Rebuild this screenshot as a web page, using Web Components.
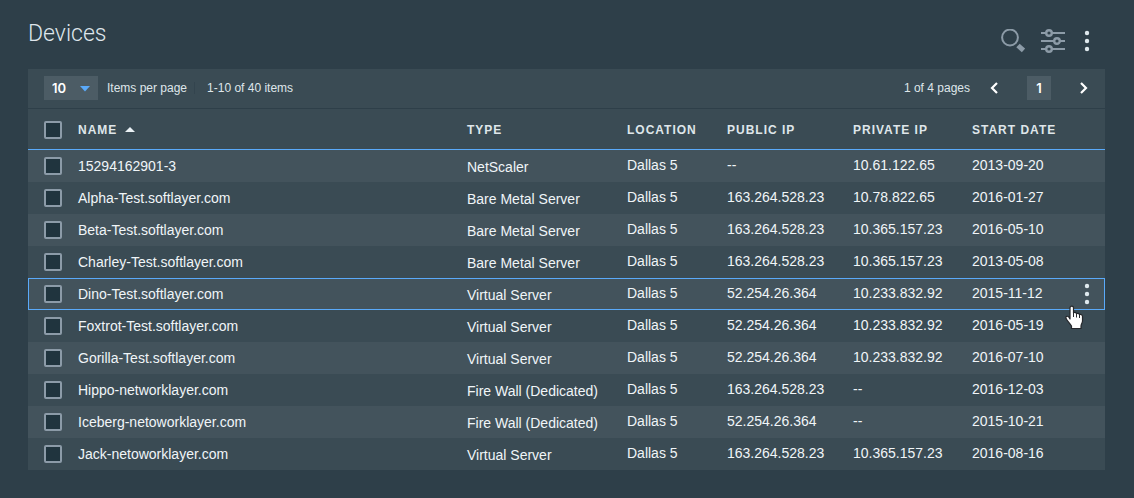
<!DOCTYPE html>
<html lang="en">
<head>
<meta charset="utf-8">
<title>Devices</title>
<style>
  body { margin: 0; min-height: 100vh; background: #2e3f49; font-family: "Liberation Sans", Arial, sans-serif; color: #f0f5f8; }
</style>
</head>
<body>
<devices-page></devices-page>

<template id="page-tpl">
  <style>
    :host { display: block; padding: 20px 29px 28px 28px; }
  </style>
  <page-header>Devices</page-header>
  <main>
    <pagination-bar></pagination-bar>
    <device-table></device-table>
  </main>
</template>

<template id="header-tpl">
  <style>
    :host { display: flex; justify-content: space-between; align-items: flex-start; height: 49px; }
    h1 { margin: 0; font: 300 23px/27px Roboto, sans-serif; color: #dfe6ec; }
    nav { display: flex; gap: 16px; padding: 9px 12px 0 0; }
    button { display: block; padding: 0; border: 0; background: none; color: #8c9ba7; height: 24px; }
    button:last-child { color: #dfe9ee; }
    svg { display: block; }
  </style>
  <h1><slot></slot></h1>
  <nav aria-label="Table tools">
    <button type="button" aria-label="Search"><svg width="24" height="24" viewBox="0 0 24 24" fill="none" stroke="currentColor"><circle cx="9" cy="8.500" r="7.900" stroke-width="2"/><path d="M17 16.500l5.500 5" stroke-width="5"/></svg></button>
    <button type="button" aria-label="Filter"><svg width="24" height="24" viewBox="0 0 24 24" fill="none" stroke="currentColor"><path d="M0 4h5M11 4h13M0 12h13M19 12h5M0 20h5M11 20h13" stroke-width="2"/><g stroke-width="2.400"><circle cx="8" cy="4" r="2.800"/><circle cx="16" cy="12" r="2.800"/><circle cx="8" cy="20" r="2.800"/></g></svg></button>
    <button type="button" aria-label="More options"><dots-icon></dots-icon></button>
  </nav>
</template>

<template id="dots-tpl">
  <style>
    :host { display: block; width: 12px; height: 24px; }
    svg { display: block; }
  </style>
  <svg width="12" height="24" viewBox="0 0 12 24" fill="currentColor"><circle cx="6" cy="4" r="2.200"/><circle cx="6" cy="12" r="2.200"/><circle cx="6" cy="20" r="2.200"/></svg>
</template>

<template id="pagination-tpl">
  <style>
    :host { display: flex; align-items: center; justify-content: space-between; height: 38px; padding: 0 14px 1px 16px; background: #3a4b54; border-bottom: 1px solid #2e3f49; font-size: 12px; line-height: 16px; color: #dfe6ea; }
    div { display: flex; align-items: center; }
    .size { position: relative; margin-right: 9px; }
    select { appearance: none; display: block; width: 54px; height: 24px; padding: 0 8px; border: 0; border-radius: 0; background: #4c5c65; color: #fff; font: 600 13px/24px Inter, sans-serif; }
    .size svg { position: absolute; right: 8px; top: 10px; pointer-events: none; }
    .range { margin-left: 7px; padding-left: 12px; border-left: 1px solid #33444e; line-height: 12px; }
    button { display: grid; place-items: center; width: 14px; height: 24px; padding: 0; border: 0; background: none; color: #fff; font: 600 13px/24px Inter, sans-serif; }
    .pager { gap: 26px; }
    .count { margin-right: -9px; }
    .current { width: 24px; background: #4c5c65; }
  </style>
  <div>
    <div class="size">
      <select id="size" aria-labelledby="size-label"><option>10</option><option>20</option><option>40</option></select>
      <svg width="10" height="6" viewBox="0 0 10 6"><path d="M0 0h10L5 5.500z" fill="#5aaafa"/></svg>
    </div>
    <label id="size-label" for="size">Items per page</label>
    <span class="range">1-10 of 40 items</span>
  </div>
  <div class="pager">
    <span class="count">1 of 4 pages</span>
    <button type="button" aria-label="Previous page"><svg width="8" height="12" viewBox="0 0 8 12" fill="none" stroke="currentColor" stroke-width="2.200"><path d="M7 1L2 6l5 5"/></svg></button>
    <button type="button" class="current" aria-current="page">1</button>
    <button type="button" aria-label="Next page"><svg width="8" height="12" viewBox="0 0 8 12" fill="none" stroke="currentColor" stroke-width="2.200"><path d="M1 1l5 5-5 5"/></svg></button>
  </div>
</template>

<template id="table-tpl">
  <style>
    :host { display: block; }
    table { width: 100%; table-layout: fixed; border-collapse: separate; border-spacing: 0; font-size: 14px; line-height: 16px; }
    .c-check { width: 50px; } .c-type { width: 160px; } .c-loc { width: 100px; } .c-pub { width: 126px; } .c-priv { width: 119px; } .c-date { width: 96px; } .c-menu { width: 37px; }
    th, td { padding: 0; text-align: left; white-space: nowrap; box-sizing: border-box; }
    th { height: 41px; padding-top: 2px; background: #3a4b54; border-bottom: 1px solid #5aaafa; font-size: 12px; font-weight: 700; letter-spacing: 1px; color: #dfe6ea; }
    th svg { margin-left: 8px; vertical-align: 2px; }
    td { height: 32px; background: #3a4b54; padding-bottom: 2px; }
    tbody tr:nth-child(odd) td { background: #43535c; }
    td.name { padding-bottom: 0; }
    td.type { padding: 2px 0 0; }
    th.check { padding: 2px 0 0 16px; }
    td.check { padding: 0 0 0 16px; }
    input { appearance: none; display: block; box-sizing: border-box; width: 18px; height: 18px; margin: 0; border: 2px solid #8c9ba8; border-radius: 2px; background: #20343e; }
    tr.active { position: relative; z-index: 1; outline: 1px solid #5aaafa; outline-offset: -1px; }
    td.menu { padding: 0; }
    .menu button { display: block; margin-left: 13px; padding: 0; border: 0; background: none; color: #dfe9ee; }
    .menu svg { position: absolute; right: 21px; top: 27px; pointer-events: none; }
  </style>
  <table>
    <colgroup><col class="c-check"><col><col class="c-type"><col class="c-loc"><col class="c-pub"><col class="c-priv"><col class="c-date"><col class="c-menu"></colgroup>
    <thead><tr>
      <th class="check"><input type="checkbox" aria-label="Select all devices"></th>
      <th scope="col" aria-sort="ascending">NAME<svg width="10" height="5" viewBox="0 0 10 5"><path d="M0 5h10L5 0z" fill="#eaf1f5"/></svg></th>
      <th scope="col">TYPE</th><th scope="col">LOCATION</th><th scope="col">PUBLIC IP</th><th scope="col">PRIVATE IP</th><th scope="col">START DATE</th><th></th>
    </tr></thead>
    <tbody></tbody>
  </table>
</template>

<template id="row-menu-tpl">
  <button type="button" aria-label="Device actions"><dots-icon></dots-icon></button>
  <svg width="19" height="25" viewBox="0 0 19 25"><path d="M5 14V3c0-2.500 3.500-2.500 3.500 0v5c.8-1 2.500-.8 3 .7.900-.7 2.500-.4 2.900.9 1.400-.6 3.100.2 3.100 1.900v4.500c0 2-1.500 3-1.500 5V23.500H6.500V21C5 18.500 1.800 15.500 1 13.300.3 11.300 2.600 10.600 3.800 12z" fill="#fff" stroke="#26282c" stroke-width="1.200" stroke-linejoin="round"/><path d="M8.500 8v4M11.500 9v3.500M14.500 10v3" stroke="#26282c" stroke-width="1" fill="none"/></svg>
</template>

<script>
  class TemplateElement extends HTMLElement {
    constructor() {
      super();
      this.attachShadow({ mode: 'open' }).append(document.getElementById(this.constructor.template).content.cloneNode(true));
    }
  }

  customElements.define('dots-icon', class extends TemplateElement { static template = 'dots-tpl'; });
  customElements.define('page-header', class extends TemplateElement { static template = 'header-tpl'; });
  customElements.define('pagination-bar', class extends TemplateElement { static template = 'pagination-tpl'; });

  const devices = [
    ['15294162901-3', 'NetScaler', 'Dallas 5', '--', '10.61.122.65', '2013-09-20'],
    ['Alpha-Test.softlayer.com', 'Bare Metal Server', 'Dallas 5', '163.264.528.23', '10.78.822.65', '2016-01-27'],
    ['Beta-Test.softlayer.com', 'Bare Metal Server', 'Dallas 5', '163.264.528.23', '10.365.157.23', '2016-05-10'],
    ['Charley-Test.softlayer.com', 'Bare Metal Server', 'Dallas 5', '163.264.528.23', '10.365.157.23', '2013-05-08'],
    ['Dino-Test.softlayer.com', 'Virtual Server', 'Dallas 5', '52.254.26.364', '10.233.832.92', '2015-11-12'],
    ['Foxtrot-Test.softlayer.com', 'Virtual Server', 'Dallas 5', '52.254.26.364', '10.233.832.92', '2016-05-19'],
    ['Gorilla-Test.softlayer.com', 'Virtual Server', 'Dallas 5', '52.254.26.364', '10.233.832.92', '2016-07-10'],
    ['Hippo-networklayer.com', 'Fire Wall (Dedicated)', 'Dallas 5', '163.264.528.23', '--', '2016-12-03'],
    ['Iceberg-netoworklayer.com', 'Fire Wall (Dedicated)', 'Dallas 5', '52.254.26.364', '--', '2015-10-21'],
    ['Jack-netoworklayer.com', 'Virtual Server', 'Dallas 5', '163.264.528.23', '10.365.157.23', '2016-08-16']
  ];
  const ACTIVE_ROW = 4;

  customElements.define('device-table', class extends TemplateElement {
    static template = 'table-tpl';
    constructor() {
      super();
      const body = this.shadowRoot.querySelector('tbody');
      devices.forEach((device, i) => {
        const row = body.insertRow();
        const check = row.insertCell();
        check.className = 'check';
        const box = document.createElement('input');
        box.type = 'checkbox';
        box.setAttribute('aria-label', 'Select ' + device[0]);
        check.append(box);
        device.forEach((text, col) => {
          const cell = row.insertCell();
          cell.textContent = text;
          cell.className = ['name', 'type', 'location', 'ip', 'ip', 'date'][col];
        });
        const menu = row.insertCell();
        menu.className = 'menu';
        if (i === ACTIVE_ROW) {
          row.className = 'active';
          menu.append(document.getElementById('row-menu-tpl').content.cloneNode(true));
        }
      });
    }
  });

  customElements.define('devices-page', class extends TemplateElement { static template = 'page-tpl'; });
</script>
</body>
</html>
